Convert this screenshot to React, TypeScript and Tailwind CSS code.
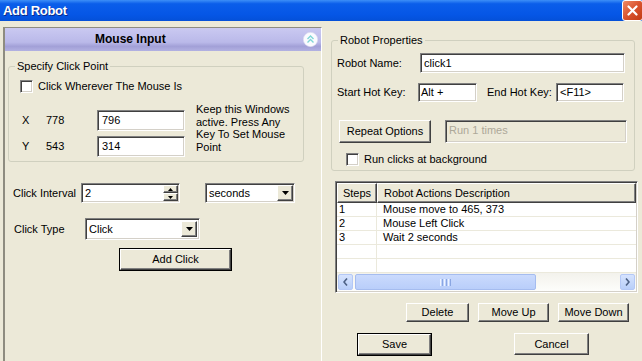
import React from "react";

const sunken =
  "bg-white border border-t-[#808080] border-l-[#808080] border-r-white border-b-white shadow-[inset_1px_1px_0_#404040,inset_-1px_-1px_0_#d4d0c8]";
const raised =
  "bg-[#ECE9D8] border border-t-white border-l-white border-r-[#404040] border-b-[#404040] shadow-[inset_-1px_-1px_0_#808080]";

function Checkbox() {
  return <div className={`${sunken} w-[13px] h-[13px] flex-none`} />;
}

function DropBtn() {
  return (
    <div className={`${raised} w-[16px] h-[16px] flex items-center justify-center flex-none`}>
      <svg width="7" height="4" viewBox="0 0 7 4">
        <path d="M0 0h7L3.5 4z" fill="#000" />
      </svg>
    </div>
  );
}

function Button({ label, className, def }: { label: string; className: string; def?: boolean }) {
  if (def) {
    return (
      <div className={`border border-black flex ${className}`}>
        <div className={`${raised} flex-1 flex items-center justify-center`}>{label}</div>
      </div>
    );
  }
  return <div className={`${raised} flex items-center justify-center ${className}`}>{label}</div>;
}

function CoordRow({ axis, val, input }: { axis: string; val: string; input: string }) {
  return (
    <div className="flex items-center h-[21px]">
      <span className="w-[26px] pl-[2px]">{axis}</span>
      <span className="w-[51px]">{val}</span>
      <div className={`${sunken} w-[88px] h-[21px] flex items-center pl-[4px]`}>{input}</div>
    </div>
  );
}

const steps = [
  ["1", "Mouse move to 465, 373"],
  ["2", "Mouse Left Click"],
  ["3", "Wait 2 seconds"],
  ["", ""],
  ["", ""],
];

export default function App() {
  return (
    <div className="w-[642px] h-[361px] overflow-hidden bg-[#ECE9D8] text-[11px] leading-[13px] text-black font-['Liberation_Sans',Arial,sans-serif]">
      {/* title bar */}
      <div className="h-[21px] flex items-center justify-between bg-[linear-gradient(#3d8ff7,#0b5eea_18%,#0556e6_70%,#0450d8)]">
        <span className="ml-[3px] text-white font-bold text-[13px] tracking-[-0.3px] [text-shadow:1px_1px_0_#0a2a8a]">
          Add Robot
        </span>
        <div className="w-[21px] h-[21px] -mr-[1px] rounded-[3px] border border-white bg-[linear-gradient(135deg,#f08a66,#d9532e_50%,#c23a14)] flex items-center justify-center">
          <svg width="11" height="11" viewBox="0 0 11 11">
            <path d="M1.5 1.5l8 8M9.5 1.5l-8 8" stroke="#fff" strokeWidth="2.2" strokeLinecap="round" />
          </svg>
        </div>
      </div>

      <div className="flex pl-[3px]">
        {/* left panel */}
        <div className="flex-none w-[319px] h-[334px] mt-[6px] border-l-2 border-t border-[#8e8c80] border-r border-r-white flex flex-col">
          <div className="h-[23px] flex items-center bg-[linear-gradient(#cac9f1,#bab9e9_62%,#a2a0d7_80%,#b2b1e2)]">
            <span className="ml-[90px] font-bold text-[12px]">Mouse Input</span>
            <svg className="ml-auto mr-[3px]" width="15" height="15" viewBox="0 0 15 15">
              <circle cx="7.5" cy="7.5" r="7.2" fill="#fbfbff" stroke="#d8d8ee" strokeWidth="0.6" />
              <path d="M4.5 7l3-3 3 3M4.5 10.5l3-3 3 3" fill="none" stroke="#7fd6d6" strokeWidth="1.4" />
            </svg>
          </div>

          <fieldset className="ml-[3px] mt-[9px] w-[296px] border border-[#d0d0bf] rounded-[3px] pl-[11px] pb-[4px]">
            <legend className="-ml-[5px] px-[2px] leading-[13px]">Specify Click Point</legend>
            <div className="flex items-center gap-[5px] mt-[7px]">
              <Checkbox />
              <span>Click Wherever The Mouse Is</span>
            </div>
            <div className="flex mt-[17px]">
              <div className="flex flex-col gap-[5px]">
                <CoordRow axis="X" val="778" input="796" />
                <CoordRow axis="Y" val="543" input="314" />
              </div>
              <div className="ml-[11px] -mt-[7px] leading-[12.7px] whitespace-nowrap">
                Keep this Windows
                <br />
                active. Press Any
                <br />
                Key To Set Mouse
                <br />
                Point
              </div>
            </div>
          </fieldset>

          <div className="flex items-center h-[20px] mt-[21px] ml-[8px]">
            <span className="w-[68px]">Click Interval</span>
            <div className={`${sunken} w-[99px] h-[20px] flex items-center justify-between pl-[3px] pr-[1px]`}>
              <span>2</span>
              <div className="flex flex-col">
                <div className={`${raised} w-[15px] h-[8px] flex items-center justify-center`}>
                  <svg width="5" height="3" viewBox="0 0 5 3">
                    <path d="M0 3h5L2.5 0z" fill="#000" />
                  </svg>
                </div>
                <div className={`${raised} w-[15px] h-[8px] flex items-center justify-center`}>
                  <svg width="5" height="3" viewBox="0 0 5 3">
                    <path d="M0 0h5L2.5 3z" fill="#000" />
                  </svg>
                </div>
              </div>
            </div>
            <div className={`${sunken} ml-[25px] w-[90px] h-[20px] flex items-center justify-between pl-[3px] pr-[1px]`}>
              <span>seconds</span>
              <DropBtn />
            </div>
          </div>

          <div className="flex items-center h-[22px] mt-[15px] ml-[9px]">
            <span className="w-[71px]">Click Type</span>
            <div className={`${sunken} w-[115px] h-[22px] flex items-center justify-between pl-[3px] pr-[2px]`}>
              <span>Click</span>
              <DropBtn />
            </div>
          </div>

          <Button label="Add Click" def className="ml-[114px] mt-[8px] w-[113px] h-[23px]" />
        </div>

        {/* right side */}
        <div className="flex-1 flex flex-col">
          <fieldset className="ml-[9px] mt-[13px] w-[304px] border border-[#d0d0bf] rounded-[3px] pl-[5px] pb-[4px]">
            <legend className="ml-[1px] px-[2px] leading-[13px]">Robot Properties</legend>
            <div className="flex items-center mt-[6px] h-[20px]">
              <span className="w-[83px]">Robot Name:</span>
              <div className={`${sunken} w-[205px] h-[20px] flex items-center pl-[3px]`}>click1</div>
            </div>
            <div className="flex items-center mt-[10px] h-[19px]">
              <span className="w-[81px]">Start Hot Key:</span>
              <div className={`${sunken} w-[59px] h-[19px] flex items-center pl-[2px]`}>Alt +</div>
              <span className="ml-[10px] w-[69px]">End Hot Key:</span>
              <div className={`${sunken} w-[68px] h-[19px] flex items-center pl-[3px]`}>&lt;F11&gt;</div>
            </div>
            <div className="flex items-center mt-[18px] h-[23px]">
              <Button label="Repeat Options" className="ml-[2px] w-[92px] h-[23px]" />
              <div className="ml-[14px] w-[182px] h-[23px] border border-t-[#808080] border-l-[#808080] border-r-white border-b-white shadow-[inset_1px_1px_0_#404040,inset_-1px_-1px_0_#d4d0c8] bg-[#ECE9D8] text-[#aca899] pl-[3px] pt-[3px]">
                Run 1 times
              </div>
            </div>
            <div className="flex items-center gap-[5px] mt-[10px] ml-[9px]">
              <Checkbox />
              <span>Run clicks at background</span>
            </div>
          </fieldset>

          {/* list view */}
          <div className={`${sunken} ml-[13px] mt-[10px] w-[303px] h-[112px] p-[1px] flex flex-col`}>
            <div className="flex h-[20px] flex-none">
              <div className={`${raised} w-[40px] flex items-center justify-center`}>Steps</div>
              <div className={`${raised} flex-1 flex items-center pl-[6px]`}>Robot Actions Description</div>
            </div>
            {steps.map((r, i) => (
              <div key={i} className="flex h-[14px] border-b border-[#ebe9dc] bg-white">
                <div className="w-[40px] pl-[2px] border-r border-[#ebe9dc] leading-[13px]">{r[0]}</div>
                <div className="flex-1 pl-[6px] leading-[13px]">{r[1]}</div>
              </div>
            ))}
            <div className="flex items-center h-[18px] flex-none bg-[linear-gradient(#f3f2ec,#fdfdfb)] pl-[1px] pr-[1px]">
              <div className="w-[15px] h-[16px] rounded-[2px] border border-[#b4c8f6] bg-[linear-gradient(#d6e3fe,#b9cff9)] flex items-center justify-center">
                <svg width="5" height="8" viewBox="0 0 5 8">
                  <path d="M4 0.5L1 4l3 3.5" fill="none" stroke="#4d6185" strokeWidth="1.6" />
                </svg>
              </div>
              <div className="ml-[2px] w-[181px] h-[16px] rounded-[2px] border border-[#a5bcef] bg-[linear-gradient(#cadafd,#b9cefa)] flex items-center justify-center gap-[1px]">
                <span className="w-[1px] h-[7px] bg-[#eef4ff]" />
                <span className="w-[1px] h-[7px] bg-[#8aa6e2]" />
                <span className="w-[1px] h-[7px] bg-[#eef4ff]" />
                <span className="w-[1px] h-[7px] bg-[#8aa6e2]" />
                <span className="w-[1px] h-[7px] bg-[#eef4ff]" />
                <span className="w-[1px] h-[7px] bg-[#8aa6e2]" />
              </div>
              <div className="flex-1" />
              <div className="w-[15px] h-[16px] rounded-[2px] border border-[#b4c8f6] bg-[linear-gradient(#d6e3fe,#b9cff9)] flex items-center justify-center">
                <svg width="5" height="8" viewBox="0 0 5 8">
                  <path d="M1 0.5L4 4l-3 3.5" fill="none" stroke="#4d6185" strokeWidth="1.6" />
                </svg>
              </div>
            </div>
          </div>

          <div className="flex mt-[10px] ml-[84px] gap-[9px]">
            <Button label="Delete" className="w-[63px] h-[19px]" />
            <Button label="Move Up" className="w-[71px] h-[19px]" />
            <Button label="Move Down" className="w-[71px] h-[19px]" />
          </div>

          <div className="flex mt-[11px] ml-[35px]">
            <Button label="Save" def className="w-[75px] h-[23px]" />
            <Button label="Cancel" className="ml-[82px] w-[75px] h-[22px]" />
          </div>
        </div>
      </div>
    </div>
  );
}
